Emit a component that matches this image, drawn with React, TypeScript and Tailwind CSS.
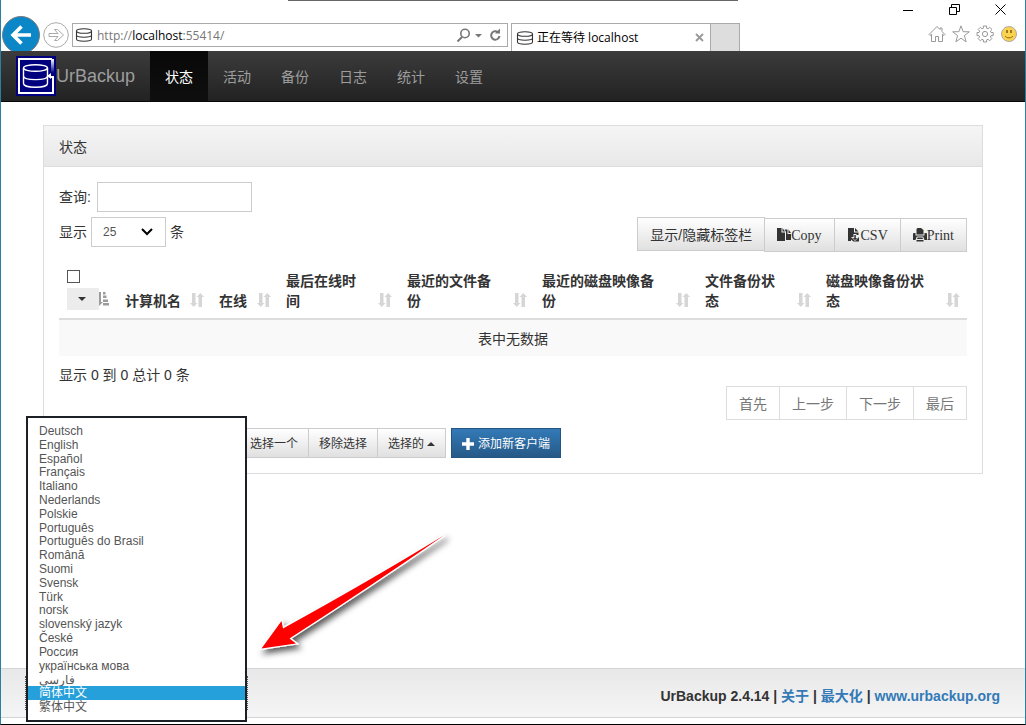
import type { ReactNode } from "react";

const navItems = ["状态", "活动", "备份", "日志", "统计", "设置"];

const columns = [
  "计算机名",
  "在线",
  "最后在线时间",
  "最近的文件备份",
  "最近的磁盘映像备份",
  "文件备份状态",
  "磁盘映像备份状态",
];

const languages = [
  "Deutsch",
  "English",
  "Español",
  "Français",
  "Italiano",
  "Nederlands",
  "Polskie",
  "Português",
  "Português do Brasil",
  "Română",
  "Suomi",
  "Svensk",
  "Türk",
  "norsk",
  "slovenský jazyk",
  "České",
  "Россия",
  "українська мова",
  "فارسی",
  "简体中文",
  "繁体中文",
];

const selectedLanguage = "简体中文";

function DatabaseIcon({ className }: { className: string }) {
  return (
    <svg viewBox="0 0 18 16" className={className} fill="none" stroke="currentColor" strokeWidth="1.1">
      <path d="M1.500 4C1.500 2.500 4 1.700 9 1.700s7.500.8 7.500 2.300S14 6.300 9 6.300 1.500 5.500 1.500 4z" />
      <path d="M1.500 4v8c0 1.400 2.500 2.200 7.500 2.200s7.500-.8 7.500-2.200V4M1.500 8c0 1.400 2.500 2.200 7.500 2.200s7.500-.8 7.500-2.200" />
    </svg>
  );
}

function Logo() {
  return (
    <svg viewBox="0 0 40 40" className="size-10 shrink-0">
      <defs>
        <linearGradient id="logo-fade" x1="0" y1="0" x2="0" y2="1">
          <stop offset="0" stopColor="#fff" />
          <stop offset="1" stopColor="#00007f" />
        </linearGradient>
      </defs>
      <rect width="40" height="40" fill="#00007f" />
      <path d="M36 3H3v34h34V21h-3" fill="none" stroke="#fff" strokeWidth="2" />
      <rect x="35" y="3" width="3" height="14" fill="url(#logo-fade)" />
      <g fill="none" stroke="#fff" strokeWidth="1.400">
        <ellipse cx="19.500" cy="12" rx="12" ry="3.300" />
        <path d="M7.500 12v15.500c0 2.200 5 3.800 12 3.800s12-1.600 12-3.800V12M7.500 20c0 2.200 5 3.600 12 3.600s12-1.400 12-3.600" />
      </g>
      <path d="M31 20l4-3v6z" fill="#fff" />
    </svg>
  );
}

function SortIcon() {
  return (
    <svg viewBox="0 0 14 14" className="size-3.5 shrink-0" fill="#d6d6d6">
      <path d="M2 0h3.500v10H7.500L3.700 14 0 10h2zM8.500 14H12V4h2l-3.700-4L6.500 4h2z" />
    </svg>
  );
}

function SortActiveIcon() {
  return (
    <svg viewBox="0 0 10 14" className="h-3.5 w-2.5 shrink-0" fill="#9c9c9c">
      <path d="M0 0h2v10h2L0 14zM4 0h2.500v2.500H4zM4 3.500h3.500V6H4zM4 7.500h5V10H4zM4 11h6v2.500H4z" />
    </svg>
  );
}

function CopyIcon() {
  return (
    <svg viewBox="0 0 14 14" className="size-3.5" fill="#333">
      <path d="M0 0h4.500v4.500H8V13H0z" />
      <path d="M5.500 0L8 3.500H5.500z" />
      <path d="M9 1.500h1.500V6H14v6H9V4L7.500 1.500z" />
      <path d="M11.500 1.500L14 5h-2.500z" />
    </svg>
  );
}

function SaveFileIcon() {
  return (
    <svg viewBox="0 0 14 14" className="size-3.5" fill="#333">
      <path d="M1 0h6v4.500h4.500V7H9.500V6h-3v3H4l4 4 4-4v4.500H6.500L4 11.500V13H1z" />
      <path d="M8 0l3.500 3.500H8zM7.300 7h1.500v3h1.400L8 12.300 5.800 10h1.500z" />
    </svg>
  );
}

function PrintIcon() {
  return (
    <svg viewBox="0 0 14 14" className="size-3.5" fill="#333">
      <path d="M3.500 1l1-1h3.500l2.500 2v4.500h-7z" />
      <path d="M0 5.500L1 5h1.500v2.500h9V5H13l1 .5V12h-2.500l-1.300-3.500H3.800L2.500 12H0z" />
      <path d="M4.500 9.500h5l.5 1.500H4zM3.500 12h7v1.500h-7z" />
    </svg>
  );
}

function BrowserBar() {
  return (
    <header className="relative flex h-[51px] items-end overflow-hidden bg-white font-['Open_Sans','Noto_Sans_CJK_SC',sans-serif] text-[12px]">
      <div className="absolute left-[287px] top-0 h-px w-[450px] bg-[#666]" />
      <button aria-label="后退" className="mb-[-4px] size-10 shrink-0">
        <svg viewBox="0 0 40 40" className="size-10">
          <circle cx="20" cy="20" r="18.500" fill="#0b86c6" stroke="#777b80" strokeWidth="1" />
          <path d="M30 20H12M20.500 11.500L12 20l8.500 8.500" fill="none" stroke="#fff" strokeWidth="3.600" />
        </svg>
      </button>
      <button aria-label="前进" className="mb-[3px] ml-0.5 size-[26px] shrink-0">
        <svg viewBox="0 0 26 26" className="size-[26px]" fill="none" stroke="#aaa">
          <circle cx="13" cy="13" r="12.300" />
          <path d="M6 11.500h9L11.500 7.500h3L20.500 13l-6 5.500h-3l3.500-4H6z" />
        </svg>
      </button>
      <div className="mb-1 ml-[3px] flex h-6 min-w-0 max-w-[436px] flex-[436] items-center border border-[#aaa] pl-[2px] pr-1">
        <DatabaseIcon className="h-4 w-[18px] shrink-0 text-[#333]" />
        <span className="ml-1 min-w-0 flex-1 pt-0.5 text-[#777]">
          http://<span className="text-black">localhost</span>:55414/
        </span>
        <svg viewBox="0 0 48 16" className="h-4 w-12 shrink-0" fill="none" stroke="#777" strokeWidth="1.600">
          <circle cx="10" cy="6.500" r="4.200" />
          <path d="M7 10L2.500 14.500" strokeWidth="2" />
          <path d="M20 7h7l-3.500 3.500z" fill="#777" stroke="none" />
          <path d="M43 5.200A4.200 4.200 0 1 0 44.500 9" strokeWidth="2" />
          <path d="M40 6.500h5v-5z" fill="#777" stroke="none" />
        </svg>
      </div>
      <div className="ml-[3px] flex h-7 w-[200px] shrink-0 items-center border border-b-0 border-[#aaa] pl-1 pr-1.5">
        <DatabaseIcon className="h-4 w-[18px] shrink-0 text-[#333]" />
        <span className="ml-[3px] flex-1 text-black">正在等待 localhost</span>
        <button aria-label="关闭标签页">
          <svg viewBox="0 0 9 9" className="size-[9px]" stroke="#999" strokeWidth="1.800">
            <path d="M1 1l7 7M8 1L1 8" />
          </svg>
        </button>
      </div>
      <button aria-label="新建标签页" className="h-7 w-[29px] shrink-0 border border-b-0 border-l-0 border-[#aaa] bg-[#ddd]" />
      <div className="ml-auto flex h-full shrink-0 flex-col items-end gap-2.5 pt-1">
        <div className="flex gap-[35px] pr-[19px] text-black">
          <button aria-label="最小化">
            <svg viewBox="0 0 11 11" className="size-[11px]" stroke="currentColor">
              <path d="M0 6.500h10" />
            </svg>
          </button>
          <button aria-label="还原">
            <svg viewBox="0 0 11 11" className="size-[11px]" fill="none" stroke="currentColor">
              <path d="M.5 3.500h7v7h-7zM2.500 3V.5h8v7H8" />
            </svg>
          </button>
          <button aria-label="关闭">
            <svg viewBox="0 0 11 11" className="size-[11px]" stroke="currentColor">
              <path d="M.5.5l10 10M10.500.5l-10 10" />
            </svg>
          </button>
        </div>
        <div className="flex gap-1.5 pr-[7px]">
          <button aria-label="主页">
            <svg viewBox="0 0 18 18" className="size-[18px]" fill="none" stroke="#999">
              <path d="M1 9.500L9 1.500l3 3V3h2v3.500l3 3-1 1-1.500-1.300v7.300h-4v-5H7.500v5h-4V9.200L2 10.500z" />
            </svg>
          </button>
          <button aria-label="收藏夹">
            <svg viewBox="0 0 18 18" className="size-[18px]" fill="none" stroke="#999">
              <path d="M9 .8l2.100 5.900 6.200.1-4.900 3.800 1.700 6.200L9 13.200l-5.100 3.600 1.700-6.200L.7 6.800l6.200-.1z" />
            </svg>
          </button>
          <button aria-label="工具">
            <svg viewBox="0 0 18 18" className="size-[18px]" fill="none" stroke="#999">
              <path d="M7.400 1h3.200v2.200l1.500.6 1.600-1.500L16 4.500l-1.600 1.600.6 1.400h2.200v3.100H15l-.6 1.400 1.500 1.600-2.200 2.200-1.600-1.500-1.500.6V17H7.400v-2.100l-1.500-.6-1.600 1.500-2.200-2.200L3.700 12 3 10.600H1V7.500h2l.7-1.400L2.100 4.500l2.200-2.200 1.600 1.500 1.500-.6z" />
              <circle cx="9" cy="9" r="2.600" />
            </svg>
          </button>
          <button aria-label="反馈">
            <svg viewBox="0 0 18 18" className="size-[18px]">
              <circle cx="9" cy="9" r="7.500" fill="#fbd34c" stroke="#aaa" />
              <path d="M7 5v3M11 5v3" stroke="#6b561c" strokeWidth="1.400" />
              <path d="M5 11c1.500 2.500 6.500 2.500 8 0" fill="none" stroke="#8a6d1d" />
            </svg>
          </button>
        </div>
      </div>
    </header>
  );
}

function NavBar() {
  return (
    <nav className="flex h-[51px] border-b border-[#080808] bg-linear-to-b from-[#3c3c3c] to-[#222]">
      <a href="#home" className="flex items-center px-[15px] text-[18px] text-[#9d9d9d]">
        <Logo />
        UrBackup
      </a>
      {navItems.map((item, i) => (
        <a
          key={item}
          href={`#${item}`}
          className={
            i === 0
              ? "flex items-center bg-linear-to-b from-[#080808] to-[#0f0f0f] px-[15px] pt-0.5 text-white"
              : "flex items-center px-[15px] pt-0.5 text-[#9d9d9d]"
          }
        >
          {item}
        </a>
      ))}
    </nav>
  );
}

function ExportButton({ icon, children }: { icon: ReactNode; children: ReactNode }) {
  return (
    <button className="-ml-px mt-px flex h-[34px] items-center border border-[#ccc] bg-linear-to-b from-white to-[#e0e0e0] px-3 font-['Liberation_Serif',serif] text-[14px] text-[#333]">
      {icon}
      <span className="pt-0.5">{children}</span>
    </button>
  );
}

function ClientTable() {
  return (
    <table className="mt-[11px] w-full table-fixed border-collapse">
      <colgroup>
        <col className="w-[58px]" />
        <col className="w-[94px]" />
        <col className="w-[67px]" />
        <col className="w-[121px]" />
        <col className="w-[135px]" />
        <col className="w-[163px]" />
        <col className="w-[121px]" />
        <col className="w-[149px]" />
      </colgroup>
      <thead>
        <tr className="border-b-2 border-[#ddd]">
          <th className="pb-2 pl-2 pt-[7px] align-bottom">
            <input
              type="checkbox"
              aria-label="全选"
              className="block size-[13px] appearance-none border border-[#555] bg-white"
            />
            <div className="mt-[5px] flex items-center">
              <button
                aria-label="选择选项"
                className="flex h-[22px] w-8 items-center justify-center bg-[#ececec] pr-0.5"
              >
                <svg viewBox="0 0 8 4" className="h-1 w-2" fill="#333">
                  <path d="M0 0h8L4 4z" />
                </svg>
              </button>
              <SortActiveIcon />
            </div>
          </th>
          {columns.map((name) => (
            <th key={name} className="pb-[7px] pl-2 pr-[7px] pt-2 text-left align-bottom font-bold">
              <div className="flex items-end gap-[9px]">
                <span className="min-w-0 flex-1">{name}</span>
                <span className="pb-1">
                  <SortIcon />
                </span>
              </div>
            </th>
          ))}
        </tr>
      </thead>
      <tbody>
        <tr className="bg-[#f9f9f9]">
          <td colSpan={8} className="px-2 pb-[7px] pt-[9px] text-center">
            表中无数据
          </td>
        </tr>
      </tbody>
    </table>
  );
}

function StatusPanel() {
  return (
    <section className="border border-[#ddd] bg-white">
      <h1 className="border-b border-[#ddd] bg-linear-to-b from-[#f5f5f5] to-[#e8e8e8] px-[15px] pb-[9px] pt-[11px]">
        状态
      </h1>
      <div className="p-[15px]">
        <div className="flex items-center gap-1.5">
          <label htmlFor="search">查询:</label>
          <input id="search" type="text" className="h-[30px] w-[155px] border border-[#ccc] px-2.5" />
        </div>
        <div className="mt-[5px] flex items-start justify-between">
          <label className="flex items-center gap-1">
            显示
            <span className="relative flex">
              <select
                defaultValue="25"
                className="h-[30px] w-[75px] appearance-none border border-[#ccc] bg-white pl-[11px] text-[12px] text-[#555]"
              >
                <option>25</option>
              </select>
              <svg
                viewBox="0 0 12 8"
                className="pointer-events-none absolute right-[13px] top-[11px] h-2 w-3"
                fill="none"
                stroke="#000"
                strokeWidth="2"
              >
                <path d="M1 1l5 5 5-5" />
              </svg>
            </span>
            条
          </label>
          <div className="flex items-start">
            <button className="h-[34px] border border-[#ccc] bg-linear-to-b from-white to-[#e0e0e0] px-3 pt-0.5">
              显示/隐藏标签栏
            </button>
            <ExportButton icon={<CopyIcon />}>Copy</ExportButton>
            <ExportButton icon={<SaveFileIcon />}>CSV</ExportButton>
            <ExportButton icon={<PrintIcon />}>Print</ExportButton>
          </div>
        </div>
        <ClientTable />
        <p className="mt-[9px]">显示 0 到 0 总计 0 条</p>
        <div className="mt-px flex justify-end text-[#777]">
          {["首先", "上一步", "下一步", "最后"].map((label) => (
            <button key={label} className="-ml-px h-[34px] border border-[#ddd] bg-white px-3 pt-0.5">
              {label}
            </button>
          ))}
        </div>
        <div className="mt-2 flex pl-[180px] text-[12px]">
          <button className="h-[30px] border border-[#ccc] bg-linear-to-b from-white to-[#e0e0e0] px-2.5 pt-0.5">
            选择一个
          </button>
          <button className="-ml-px h-[30px] border border-[#ccc] bg-linear-to-b from-white to-[#e0e0e0] px-2.5 pt-0.5">
            移除选择
          </button>
          <button className="-ml-px flex h-[30px] items-center gap-[3px] border border-[#ccc] bg-linear-to-b from-white to-[#e0e0e0] px-2.5 pt-0.5">
            选择的
            <svg viewBox="0 0 8 4" className="h-1 w-2" fill="#333">
              <path d="M0 4h8L4 0z" />
            </svg>
          </button>
          <button className="ml-[5px] flex h-[30px] items-center gap-1 border border-[#245580] bg-linear-to-b from-[#337ab7] to-[#265a88] px-2.5 pt-0.5 text-white">
            <svg viewBox="0 0 12 12" className="size-3" fill="#fff">
              <path d="M4.300 0h3.400v4.300H12v3.400H7.700V12H4.300V7.700H0V4.300h4.300z" />
            </svg>
            添加新客户端
          </button>
        </div>
      </div>
    </section>
  );
}

function LanguagePicker() {
  return (
    <div className="relative ml-6 h-[34px] w-[223px] border border-dotted border-[#555]">
      <ul
        role="listbox"
        aria-label="语言"
        className="absolute bottom-[-13px] left-0 flex h-[306px] w-[221px] flex-col border-2 border-[#1c1f24] bg-white py-1.5 text-[12px] leading-[14px] text-[#555]"
      >
        {languages.map((name) => (
          <li
            key={name}
            role="option"
            aria-selected={name === selectedLanguage}
            className={
              name === selectedLanguage
                ? "flex min-h-0 flex-1 items-center bg-[#26a0da] pl-[11px] text-white"
                : "flex min-h-0 flex-1 items-center pl-[11px]"
            }
          >
            {name}
          </li>
        ))}
      </ul>
    </div>
  );
}

function Pointer() {
  return (
    <svg viewBox="0 0 220 150" className="pointer-events-none absolute left-[239px] top-[520px] h-[150px] w-[220px]">
      <defs>
        <filter id="pointer-shadow" x="-20%" y="-20%" width="150%" height="150%">
          <feDropShadow dx="3" dy="4" stdDeviation="3" floodColor="#000" floodOpacity="0.65" />
        </filter>
      </defs>
      <g filter="url(#pointer-shadow)">
        <path
          d="M21.500 128.500L41.500 101 43 108.500Q131 60 204.500 15Q131 66 49.500 118.500L56 123.500z"
          fill="#fff"
          stroke="#fff"
          strokeWidth="2.600"
        />
        <path d="M21.500 128.500L41.500 101 43 108.500Q131 60 204.500 15Q131 66 49.500 118.500L56 123.500z" fill="#fe0000" />
      </g>
    </svg>
  );
}

export default function App() {
  return (
    <div className="relative flex min-h-screen flex-col border-x border-b border-x-[#2a7fa5] border-b-black bg-white font-['Liberation_Sans','Noto_Sans_CJK_SC',sans-serif] text-[14px] leading-5 text-[#333]">
      <BrowserBar />
      <NavBar />
      <main className="px-[42px] pb-6 pt-[23px]">
        <StatusPanel />
      </main>
      <footer className="mb-1.5 mt-auto flex h-[50px] items-center justify-between border-y border-[#d4d4d4] bg-linear-to-b from-[#e8e8e8] to-[#f5f5f5] pr-[25px]">
        <LanguagePicker />
        <p className="pt-1.5 font-bold">
          UrBackup 2.4.14 |{" "}
          <a href="#about" className="text-[#337ab7]">
            关于
          </a>{" "}
          |{" "}
          <a href="#maximize" className="text-[#337ab7]">
            最大化
          </a>{" "}
          |{" "}
          <a href="#site" className="text-[#337ab7]">
            www.urbackup.org
          </a>
        </p>
      </footer>
      <Pointer />
    </div>
  );
}
